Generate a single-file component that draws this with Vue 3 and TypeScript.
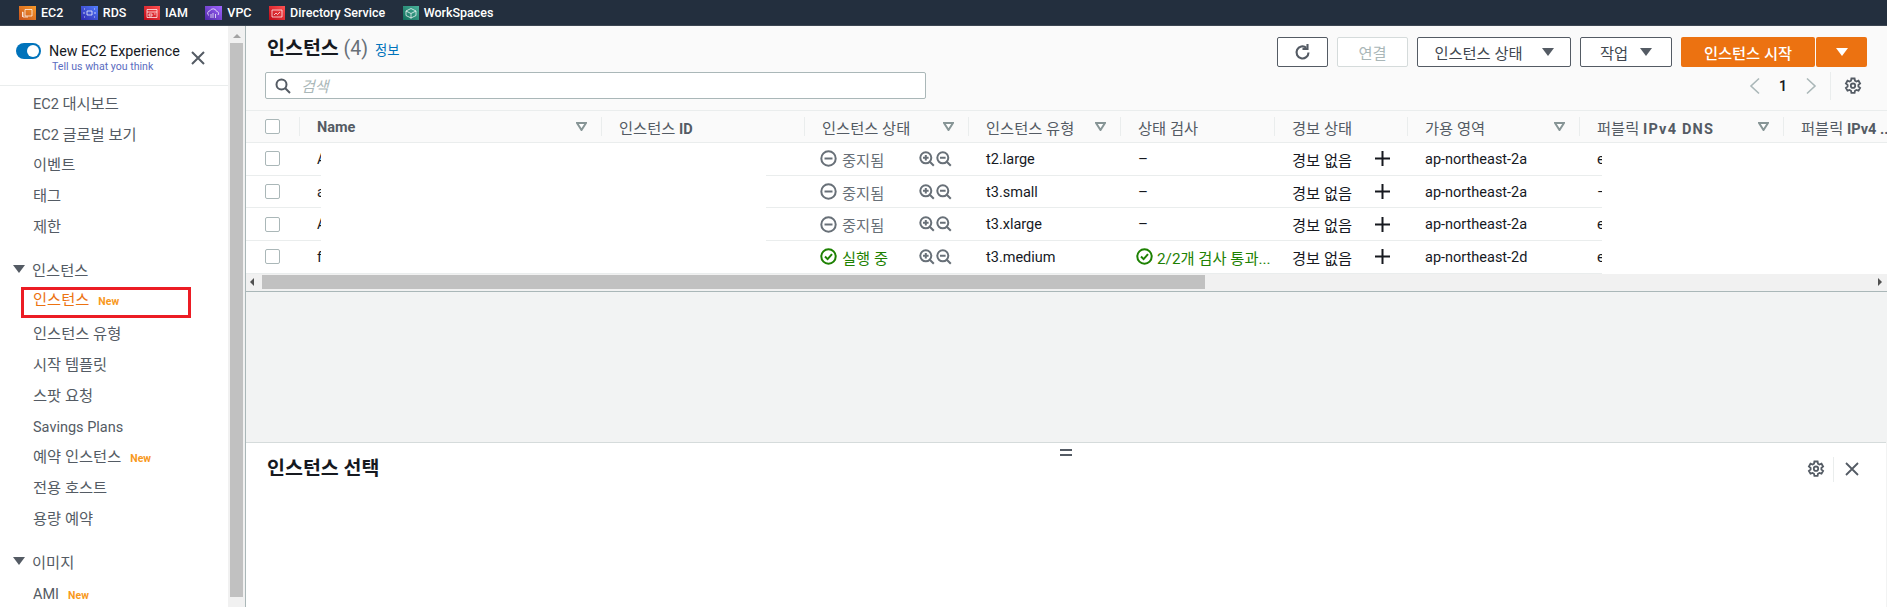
<script setup lang="ts">
interface Svc { name: string; from: string; to: string; w: number; glyph: string }
const services: Svc[] = [
  { name: 'EC2', from: '#c8511b', to: '#f79a2a', w: 17, glyph: 'M6 3.500h7v6.500H6zM4 6v5h5M4 6h-.5v5' },
  { name: 'RDS', from: '#2e27ad', to: '#527fff', w: 17, glyph: 'M6 5h5v4H6zM3 3h1M13 3h1M3 11h1M13 11h1M3 6v2M14 6v2' },
  { name: 'IAM', from: '#bd0816', to: '#ff5252', w: 16, glyph: 'M3 3.500h10v8H3zM3 6h10M5 8h3v2H5zM10 8h1.500' },
  { name: 'VPC', from: '#4d27a8', to: '#a166ff', w: 17, glyph: 'M4 9.500a2.500 2.500 0 0 1 1-4.700 3.500 3.500 0 0 1 6.500 0.500 2.200 2.200 0 0 1 1.500 3.700M8 7v5M10.500 8v4M6 8v4' },
  { name: 'Directory Service', from: '#bd0816', to: '#ff5252', w: 16, glyph: 'M3 4h10v7H3zM5 9l2-2 1.500 1.500L11 6' },
  { name: 'WorkSpaces', from: '#116d5b', to: '#4ab29a', w: 16, glyph: 'M8 2.500l5 2.500v4.500l-5 2.500-5-2.500V5zM3 5l5 2.500L13 5M8 7.500v5' },
]
const topItems = [
  { lat: 'EC2 ', t: '대시보드' },
  { lat: 'EC2 ', t: '글로벌 보기' },
  { lat: '', t: '이벤트' },
  { lat: '', t: '태그' },
  { lat: '', t: '제한' },
]
const instItems = [
  { t: '인스턴스 유형', lat: '' },
  { t: '시작 템플릿', lat: '' },
  { t: '스팟 요청', lat: '' },
  { t: '', lat: 'Savings Plans' },
  { t: '예약 인스턴스', lat: '', isNew: true },
  { t: '전용 호스트', lat: '' },
  { t: '용량 예약', lat: '' },
]
const columns = [
  { t: '', lat: 'Name', w: 302, f: true, wide: false },
  { t: '인스턴스 ', lat: 'ID', w: 203, f: false, wide: false },
  { t: '인스턴스 상태', lat: '', w: 164, f: true, wide: false },
  { t: '인스턴스 유형', lat: '', w: 152, f: true, wide: false },
  { t: '상태 검사', lat: '', w: 154, f: false, wide: false },
  { t: '경보 상태', lat: '', w: 133, f: false, wide: false },
  { t: '가용 영역', lat: '', w: 172, f: true, wide: false },
  { t: '퍼블릭 ', lat: 'IPv4 DNS', w: 204, f: true, wide: true },
  { t: '퍼블릭 ', lat: 'IPv4 ..', w: 104, f: false, wide: false },
]
const rows = [
  { n: 'A', running: false, type: 't2.large', check: '', az: 'ap-northeast-2a', dns: 'e' },
  { n: 'a', running: false, type: 't3.small', check: '', az: 'ap-northeast-2a', dns: '–' },
  { n: 'A', running: false, type: 't3.xlarge', check: '', az: 'ap-northeast-2a', dns: 'e' },
  { n: 'f', running: true, type: 't3.medium', check: '2/2개 검사 통과...', az: 'ap-northeast-2d', dns: 'e' },
]
</script>

<template>
  <div class="page">
    <header class="topbar">
      <div v-for="(s, i) in services" :key="s.name" class="svc">
        <svg class="svc-ic" :width="s.w" height="14" :viewBox="`0 0 ${s.w} 14`">
          <defs>
            <linearGradient :id="`g${i}`" x1="0" y1="1" x2="1" y2="0">
              <stop offset="0" :stop-color="s.from" />
              <stop offset="1" :stop-color="s.to" />
            </linearGradient>
          </defs>
          <rect :width="s.w" height="14" :fill="`url(#g${i})`" />
          <path :d="s.glyph" fill="none" stroke="#fff" stroke-opacity=".8" stroke-width=".9" />
        </svg>
        <span>{{ s.name }}</span>
      </div>
    </header>

    <div class="body">
      <aside class="side">
        <div class="side-scroll">
          <div class="side-head">
            <div class="toggle-wrap">
              <div class="exp-row">
                <span class="toggle"><i></i></span>
                <span class="exp">New EC2 Experience</span>
              </div>
              <a class="tell">Tell us what you think</a>
            </div>
            <svg class="side-x" width="14" height="14" viewBox="0 0 14 14"><path d="M1 1l12 12M13 1L1 13" stroke="#545b64" stroke-width="2" fill="none" /></svg>
          </div>
          <nav class="nav">
            <a v-for="i in topItems" :key="i.t" class="item"><span class="lat">{{ i.lat }}</span>{{ i.t }}</a>
            <div class="section first"><span class="caret"></span>인스턴스</div>
            <a class="item active">인스턴스<b class="new">New</b></a>
            <a v-for="i in instItems" :key="i.t + i.lat" class="item"><span class="lat">{{ i.lat }}</span>{{ i.t }}<b v-if="i.isNew" class="new">New</b></a>
            <div class="section last"><span class="caret"></span>이미지</div>
            <a class="item"><span class="lat">AMI</span><b class="new">New</b></a>
          </nav>
        </div>
        <div class="vscroll">
          <span class="up"></span>
          <span class="thumb"></span>
        </div>
      </aside>

      <main class="main">
        <section class="panel-top">
          <div class="head">
            <div class="head-row">
              <h1>인스턴스 <span class="count">(4)</span> <a class="info">정보</a></h1>
              <div class="actions">
                <button class="btn icon-btn">
                  <svg width="19" height="19" viewBox="0 0 19 19"><path d="M15.500 9.500a6 6 0 1 1-2.200-4.700" fill="none" stroke="#545b64" stroke-width="2.100" /><path d="M14.500 1v5h-5" fill="none" stroke="#545b64" stroke-width="2.100" /></svg>
                </button>
                <button class="btn disabled connect">연결</button>
                <button class="btn state">인스턴스 상태 <span class="btn-caret"></span></button>
                <button class="btn act">작업 <span class="btn-caret"></span></button>
                <div class="split">
                  <button class="primary start">인스턴스 시작</button>
                  <button class="primary more"><span class="btn-caret white"></span></button>
                </div>
              </div>
            </div>
            <div class="search-row">
              <label class="search">
                <svg width="16" height="16" viewBox="0 0 16 16"><circle cx="6.500" cy="6.500" r="5" fill="none" stroke="#545b64" stroke-width="2" /><path d="M10 10l5 5" stroke="#545b64" stroke-width="2" /></svg>
                <span>검색</span>
              </label>
              <div class="pager">
                <svg width="12" height="18" viewBox="0 0 12 18"><path d="M10 1.500L2 9l8 7.500" fill="none" stroke="#aab7b8" stroke-width="1.600" /></svg>
                <b>1</b>
                <svg width="12" height="18" viewBox="0 0 12 18"><path d="M2 1.500L10 9l-8 7.500" fill="none" stroke="#aab7b8" stroke-width="1.600" /></svg>
                <i class="pager-sep"></i>
                <svg class="gear" width="18" height="18" viewBox="0 0 18 18"><path d="M7.400 1.500h3.200l.4 2.200 1.400.8 2.100-.8 1.600 2.800-1.700 1.400v1.600l1.700 1.400-1.600 2.800-2.100-.8-1.400.8-.4 2.200H7.400L7 13.700l-1.400-.8-2.100.8-1.600-2.800 1.700-1.400V7.900L1.900 6.500l1.600-2.800 2.100.8L7 3.700z" fill="none" stroke="#545b64" stroke-width="1.800" /><circle cx="9" cy="8.700" r="2.200" fill="none" stroke="#545b64" stroke-width="1.800" /></svg>
              </div>
            </div>
          </div>

          <div class="table">
            <div class="thead">
              <div class="cell-check"><span class="cb"></span></div>
              <div v-for="c in columns" :key="c.t + c.lat" class="th" :style="{ width: c.w + 'px' }">
                <span>{{ c.t }}<span class="lat" :class="{ wide: c.wide }">{{ c.lat }}</span></span>
                <svg v-if="c.f" class="filter" width="11" height="9" viewBox="0 0 11 9"><path d="M1 1h9L5.500 8z" fill="#fff" stroke="#879596" stroke-width="2" /></svg>
              </div>
            </div>
            <div class="tbody">
              <div v-for="(r, i) in rows" :key="i" class="tr">
                <div class="cell-check"><span class="cb"></span></div>
                <div class="td name" style="width: 302px">{{ r.n }}</div>
                <div class="td" style="width: 203px"></div>
                <div class="td st" :class="{ run: r.running }" style="width: 164px">
                  <svg v-if="r.running" width="17" height="17" viewBox="0 0 17 17"><circle cx="8.500" cy="8.500" r="7.200" fill="none" stroke="#1d8102" stroke-width="2" /><path d="M5 8.500l2.600 2.600L12 6.200" fill="none" stroke="#1d8102" stroke-width="2" /></svg>
                  <svg v-else width="17" height="17" viewBox="0 0 17 17"><circle cx="8.500" cy="8.500" r="7.200" fill="none" stroke="#687078" stroke-width="2" /><path d="M4.500 8.500h8" stroke="#687078" stroke-width="2" /></svg>
                  <span class="st-label">{{ r.running ? '실행 중' : '중지됨' }}</span>
                  <span class="zoom">
                    <svg width="16" height="16" viewBox="0 0 16 16"><circle cx="6.800" cy="6.800" r="5.500" fill="none" stroke="#687078" stroke-width="2" /><path d="M4 6.800h5.600M6.800 4v5.600M10.800 10.800l4 4" stroke="#687078" stroke-width="2" /></svg>
                    <svg width="16" height="16" viewBox="0 0 16 16"><circle cx="6.800" cy="6.800" r="5.500" fill="none" stroke="#687078" stroke-width="2" /><path d="M4 6.800h5.600M10.800 10.800l4 4" stroke="#687078" stroke-width="2" /></svg>
                  </span>
                </div>
                <div class="td mono" style="width: 152px">{{ r.type }}</div>
                <div class="td chk" style="width: 154px">
                  <template v-if="r.check">
                    <svg width="17" height="17" viewBox="0 0 17 17"><circle cx="8.500" cy="8.500" r="7.200" fill="none" stroke="#1d8102" stroke-width="2" /><path d="M5 8.500l2.600 2.600L12 6.200" fill="none" stroke="#1d8102" stroke-width="2" /></svg>
                    <span class="ok">{{ r.check }}</span>
                  </template>
                  <template v-else>–</template>
                </div>
                <div class="td alarm" style="width: 133px">
                  <span>경보 없음</span>
                  <svg width="15" height="15" viewBox="0 0 15 15"><path d="M0 7.500h15M7.500 0v15" stroke="#16191f" stroke-width="2" /></svg>
                </div>
                <div class="td mono" style="width: 172px">{{ r.az }}</div>
                <div class="td mono" style="width: 204px">{{ r.dns }}</div>
              </div>
              <div class="mask mask-a"></div>
              <div class="mask mask-b"></div>
            </div>
            <div class="hscroll">
              <span class="left"></span>
              <span class="hthumb"></span>
              <span class="right"></span>
            </div>
          </div>
        </section>

        <div class="gap"></div>

        <section class="panel-bottom">
          <span class="handle"></span>
          <h2>인스턴스 선택</h2>
          <div class="pb-tools">
            <svg class="gear" width="18" height="18" viewBox="0 0 18 18"><path d="M7.400 1.500h3.200l.4 2.200 1.400.8 2.100-.8 1.600 2.800-1.700 1.400v1.600l1.700 1.400-1.600 2.800-2.100-.8-1.400.8-.4 2.200H7.400L7 13.700l-1.400-.8-2.100.8-1.600-2.800 1.700-1.400V7.900L1.900 6.500l1.600-2.800 2.100.8L7 3.700z" fill="none" stroke="#545b64" stroke-width="1.800" /><circle cx="9" cy="8.700" r="2.200" fill="none" stroke="#545b64" stroke-width="1.800" /></svg>
            <i class="pb-sep"></i>
            <svg width="14" height="14" viewBox="0 0 14 14"><path d="M1 1l12 12M13 1L1 13" stroke="#545b64" stroke-width="1.800" fill="none" /></svg>
          </div>
        </section>
      </main>
    </div>
  </div>
</template>

<style>
html, body { margin: 0; padding: 0; overflow: hidden; background: #fff; }
</style>

<style scoped>
* { box-sizing: border-box; }
.page {
  width: 1887px;
  height: 607px;
  display: flex;
  flex-direction: column;
  overflow: hidden;
  font-family: Roboto, "Noto Sans CJK KR", sans-serif;
  font-size: 14px;
  color: #16191f;
}
.topbar {
  height: 26px;
  flex: none;
  background: #232f3e;
  border-bottom: 1px solid #3c4652;
  display: flex;
  align-items: center;
  padding-left: 19px;
  gap: 17.500px;
  color: #fff;
  font-size: 12.500px;
  font-weight: 500;
}
.svc { display: flex; align-items: center; gap: 5px; }
.svc-ic { display: block; }
.body { flex: 1; display: flex; min-height: 0; }
.side { width: 246px; flex: none; display: flex; border-right: 1px solid #aab7b8; background: #fff; }
.side-scroll { width: 228px; flex: none; overflow: hidden; }
.side-head {
  height: 60px;
  border-bottom: 1px solid #eaeded;
  padding: 16px 0 0 16px;
  display: flex;
}
.toggle-wrap { width: 175px; }
.exp-row { display: flex; align-items: center; gap: 8px; height: 17px; }
.toggle { width: 25px; height: 16px; border-radius: 8px; background: #0073bb; position: relative; flex: none; }
.toggle i { position: absolute; right: 2px; top: 2px; width: 12px; height: 12px; border-radius: 50%; background: #fff; }
.exp { font-size: 14.300px; color: #16191f; white-space: nowrap; }
.tell { display: block; margin: 1px 0 0 36px; font-size: 10.600px; color: #5a6cc0; white-space: nowrap; }
.side-x { margin-top: 9px; }
.nav { padding-top: 3px; display: flex; flex-direction: column; }
.item {
  height: 30.700px;
  line-height: 30.700px;
  padding-left: 33px;
  font-size: 15.300px;
  color: #545b64;
  white-space: nowrap;
}
.lat { font-size: 14.500px; }
.item.active {
  width: 170px;
  margin: 3px 0 1px 21px;
  padding-left: 9px;
  height: 31px;
  line-height: 21px;
  border: 3px solid #ec1c24;
  color: #ec7211;
}
.new { font-size: 10.500px; color: #f8991d; font-weight: 700; margin-left: 9px; }
.section {
  margin-top: 11px;
  height: 31px;
  padding-left: 13px;
  font-size: 15.300px;
  color: #545b64;
  display: flex;
  align-items: center;
  gap: 7px;
}
.section.last { margin-bottom: 3px; }
.caret { width: 0; height: 0; border-left: 6px solid transparent; border-right: 6px solid transparent; border-top: 8px solid #545b64; }
.vscroll {
  width: 17px;
  background: #f1f1f1;
  display: flex;
  flex-direction: column;
  align-items: center;
}
.up { margin-top: 8px; width: 0; height: 0; border-left: 4px solid transparent; border-right: 4px solid transparent; border-bottom: 4px solid #a3a3a3; }
.thumb { width: 13px; margin-top: 5px; height: 554px; background: #c1c1c1; }
.main { flex: 1; min-width: 0; display: flex; flex-direction: column; background: #f2f3f3; }
.panel-top { background: #fafafa; }
.head { height: 85px; padding: 0 20px 0 19px; border-bottom: 1px solid #eaeded; }
.head-row { height: 44px; display: flex; align-items: flex-start; justify-content: space-between; padding-top: 11px; }
h1 { margin: 0; padding-left: 2px; font-size: 19.500px; font-weight: 700; color: #16191f; line-height: 24px; white-space: nowrap; }
.count { font-weight: 400; color: #687078; }
.info { font-size: 13.300px; font-weight: 400; color: #0073bb; margin-left: 2px; }
.actions { display: flex; gap: 9px; }
.btn {
  height: 30px;
  border: 1px solid #545b64;
  border-radius: 2px;
  background: #fff;
  font: inherit;
  font-size: 15.300px;
  font-weight: 400;
  color: #414750;
  display: flex;
  align-items: center;
  justify-content: center;
  gap: 12px;
  padding: 0;
}
.icon-btn { width: 51px; }
.connect { width: 71px; }
.state { width: 154px; gap: 19px; }
.act { width: 92px; }
.disabled { border-color: #d5dbdb; color: #aab7b8; }
.btn-caret { width: 0; height: 0; border-left: 6px solid transparent; border-right: 6px solid transparent; border-top: 8px solid #545b64; }
.btn-caret.white { border-top-color: #fff; }
.split { display: flex; gap: 1px; }
.primary {
  height: 30px;
  border: 0;
  border-radius: 2px;
  background: #ec7211;
  color: #fff;
  font: inherit;
  font-size: 15.300px;
  font-weight: 500;
  display: flex;
  align-items: center;
  justify-content: center;
  padding: 0;
}
.start { width: 134px; }
.more { width: 51px; }
.search-row { display: flex; justify-content: space-between; align-items: flex-start; padding-top: 2px; }
.search {
  width: 661px;
  height: 27px;
  border: 1px solid #aab7b8;
  border-radius: 2px;
  background: #fff;
  display: flex;
  align-items: center;
  padding-left: 9px;
  gap: 10px;
  font-size: 15px;
  font-style: italic;
  color: #aab7b8;
}
.pager { display: flex; align-items: center; height: 28px; padding-right: 5px; }
.pager b { font-size: 14px; margin: 0 18px; font-weight: 600; }
.pager-sep { width: 1px; height: 28px; background: #eaeded; margin: 0 13px; }
.table { background: #fff; }
.thead { height: 32px; display: flex; background: #fafafa; border-bottom: 1px solid #eaeded; }
.cell-check { width: 53px; flex: none; display: flex; align-items: center; padding-left: 19px; }
.cb { width: 15px; height: 15px; border: 1px solid #aab7b8; border-radius: 2px; background: #fff; display: block; }
.th {
  flex: none;
  display: flex;
  align-items: center;
  justify-content: space-between;
  padding: 0 0 0 18px;
  font-size: 15.300px;
  font-weight: 400;
  color: #545b64;
  white-space: nowrap;
  position: relative;
}
.th .filter { margin-right: 14px; }
.th .lat { font-size: 14.500px; font-weight: 700; }
.th .lat.wide { letter-spacing: 1.200px; }
.th::before { content: ""; position: absolute; left: 0; top: 6px; bottom: 6px; width: 1px; background: #eaeded; }
.tbody { position: relative; }
.tr { height: 32.700px; display: flex; background: #fff; border-bottom: 1px solid #eaeded; }
.tr:last-of-type { border-bottom: 0; }
.td {
  flex: none;
  display: flex;
  align-items: center;
  padding-left: 18px;
  font-size: 15.300px;
  color: #16191f;
  white-space: nowrap;
  overflow: hidden;
}
.td.mono, .td.name { font-size: 14.500px; padding-top: 1px; }
.st { color: #687078; gap: 5px; position: relative; padding-left: 16px; }
.st.run { color: #1d8102; }
.zoom { position: absolute; left: 115px; top: 8px; display: flex; gap: 1px; }
.chk { gap: 4px; padding-left: 16px; }
.chk:not(:has(svg)) { padding-left: 18px; }
.ok { color: #1d8102; }
.alarm { justify-content: space-between; padding-right: 17px; }
.mask { position: absolute; top: 1px; bottom: 1px; background: #fff; }
.mask-a { left: 75px; width: 445px; }
.mask-b { left: 1356px; right: 0; top: 0; bottom: 0; }
.hscroll { height: 18px; background: #f1f1f1; display: flex; align-items: center; border-bottom: 1px solid #aab7b8; }
.left { width: 0; height: 0; margin-left: 4px; border-top: 4px solid transparent; border-bottom: 4px solid transparent; border-right: 4px solid #505050; }
.hthumb { width: 943px; height: 14px; background: #c1c1c1; margin-left: 8px; }
.right { width: 0; height: 0; margin-left: auto; margin-right: 5px; border-top: 4px solid transparent; border-bottom: 4px solid transparent; border-left: 4px solid #505050; }
.gap { height: 150px; flex: none; background: #f2f3f3; }
.panel-bottom {
  flex: 1;
  background: #fff;
  border-top: 1px solid #d5dbdb;
  position: relative;
  margin-right: 1px;
  padding: 14px 0 0 21px;
}
h2 { margin: 0; font-size: 19.500px; font-weight: 700; line-height: 24px; color: #16191f; }
.handle { position: absolute; left: 814px; top: 6px; width: 12px; height: 7px; border-top: 2px solid #545b64; border-bottom: 2px solid #545b64; }
.pb-tools { position: absolute; right: 27px; top: 14px; display: flex; align-items: center; }
.pb-sep { width: 1px; height: 25px; background: #eaeded; margin: 0 11px 0 8px; }
</style>
